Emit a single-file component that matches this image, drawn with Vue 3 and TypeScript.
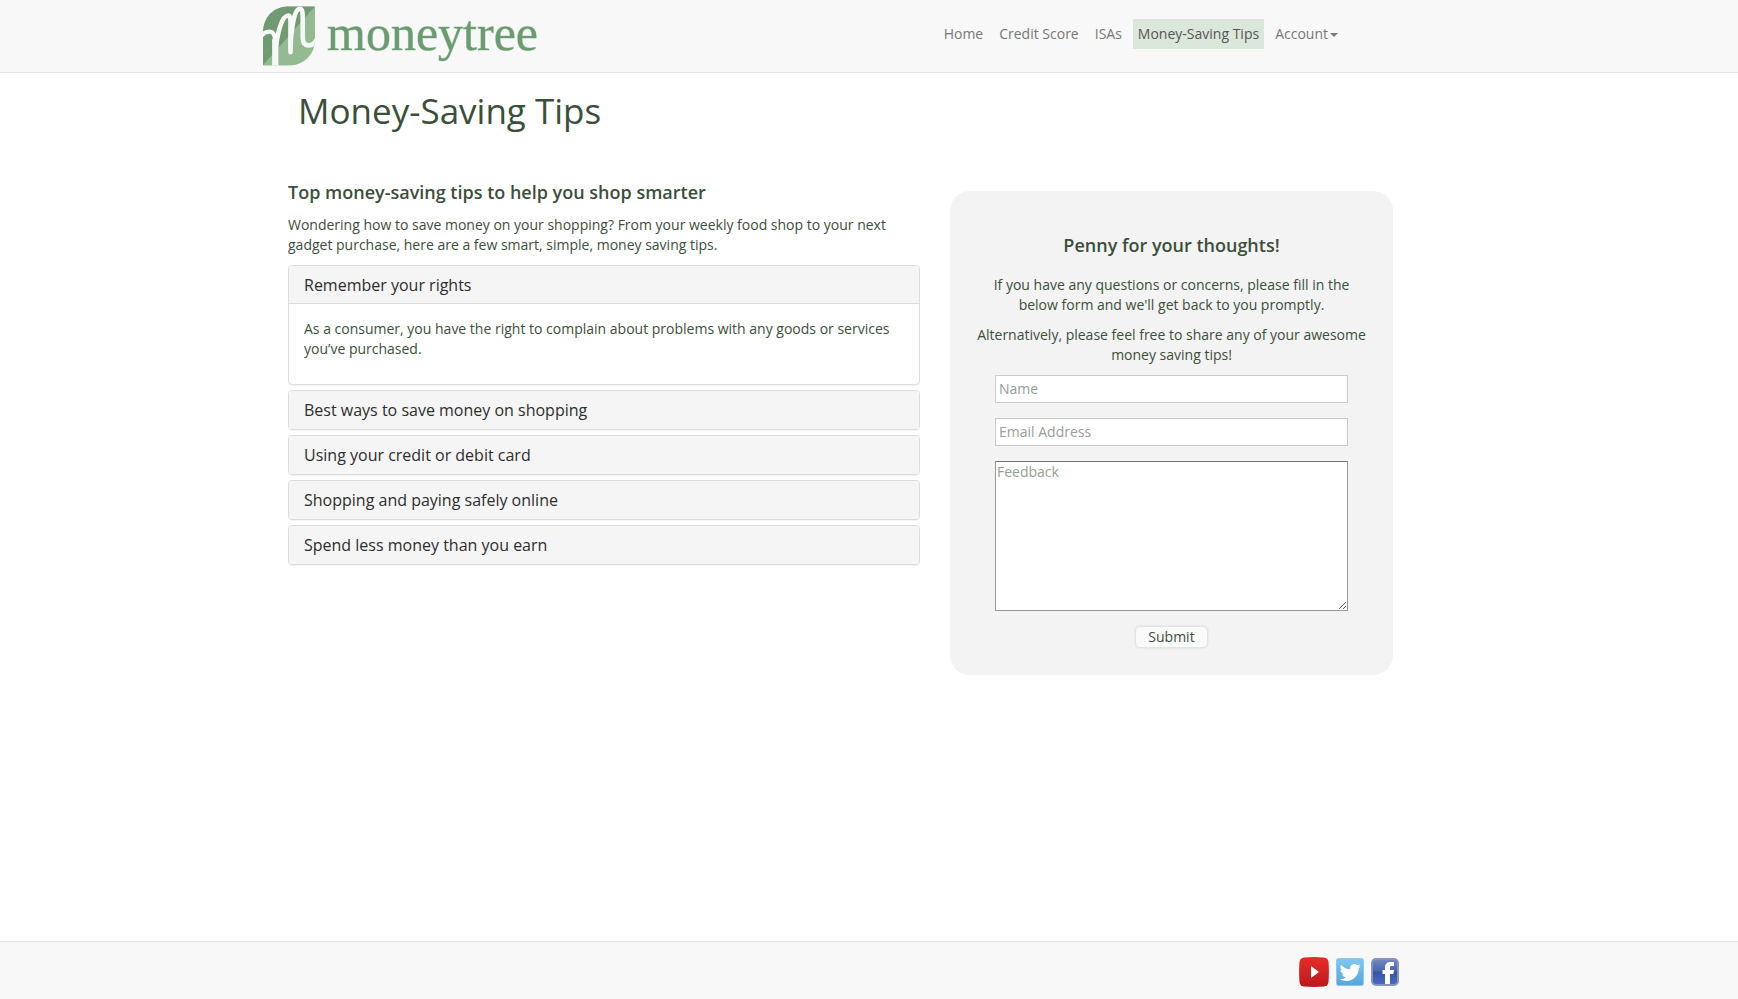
<script setup lang="ts">
import { ref } from 'vue'

interface NavLink {
  label: string
  active?: boolean
  menu?: boolean
}

interface Tip {
  title: string
  body: string
}

const links: NavLink[] = [
  { label: 'Home' },
  { label: 'Credit Score' },
  { label: 'ISAs' },
  { label: 'Money-Saving Tips', active: true },
  { label: 'Account', menu: true },
]

const tips: Tip[] = [
  {
    title: 'Remember your rights',
    body: 'As a consumer, you have the right to complain about problems with any goods or services you’ve purchased.',
  },
  { title: 'Best ways to save money on shopping', body: '' },
  { title: 'Using your credit or debit card', body: '' },
  { title: 'Shopping and paying safely online', body: '' },
  { title: 'Spend less money than you earn', body: '' },
]

const open = ref(0)
const name = ref('')
const email = ref('')
const feedback = ref('')

function toggle(index: number) {
  open.value = open.value === index ? -1 : index
}
</script>

<template>
  <div class="page">
    <header class="navbar">
      <div class="navbar-inner">
        <a class="brand" href="#">
          <svg class="mark" viewBox="24 18 157 180" aria-hidden="true">
            <defs>
              <clipPath id="leaf">
                <path d="M24 198V100C24 50 56 18 106 18H181V118C181 166 146 198 98 198Z" />
              </clipPath>
            </defs>
            <g clip-path="url(#leaf)">
              <rect x="24" y="18" width="157" height="180" fill="#93bb92" />
              <path d="M24 18H181L24 196Z" fill="#709b72" />
              <g fill="none" stroke="#f8f8f8" stroke-linecap="round" stroke-linejoin="round">
                <path stroke-width="13" d="M18 108C26 98 36 95 44 95C56 95 60 104 61 122V150" />
                <path stroke-width="19" d="M61 122V205" />
                <path stroke-width="14" d="M62 150C66 112 78 46 100 46C109 46 107 66 107 90V157" />
                <path stroke-width="14" d="M107 142C108 104 116 26 135 26C144 26 144 40 144 60V112C144 144 172 142 186 120" />
              </g>
            </g>
          </svg>
          <span class="wordmark">moneytree</span>
        </a>
        <nav class="nav">
          <a
            v-for="link in links"
            :key="link.label"
            href="#"
            class="nav-link"
            :class="{ active: link.active }"
          >{{ link.label }}<span v-if="link.menu" class="caret"></span></a>
        </nav>
      </div>
    </header>

    <main class="content">
      <h1>Money-Saving Tips</h1>
      <div class="columns">
        <section class="tips">
          <h2>Top money-saving tips to help you shop smarter</h2>
          <p>
            Wondering how to save money on your shopping? From your weekly food shop to your next gadget
            purchase, here are a few smart, simple, money saving tips.
          </p>
          <div class="accordion">
            <div v-for="(tip, index) in tips" :key="tip.title" class="panel">
              <button
                type="button"
                class="panel-heading"
                :aria-expanded="open === index"
                @click="toggle(index)"
              >{{ tip.title }}</button>
              <div v-if="open === index" class="panel-body">
                <p>{{ tip.body }}</p>
              </div>
            </div>
          </div>
        </section>

        <section class="card">
          <h2>Penny for your thoughts!</h2>
          <p>If you have any questions or concerns, please fill in the below form and we'll get back to you promptly.</p>
          <p>Alternatively, please feel free to share any of your awesome money saving tips!</p>
          <form class="form" @submit.prevent>
            <input v-model="name" type="text" placeholder="Name" aria-label="Name" />
            <input v-model="email" type="email" placeholder="Email Address" aria-label="Email Address" />
            <textarea v-model="feedback" placeholder="Feedback" aria-label="Feedback"></textarea>
            <button type="submit" class="submit">Submit</button>
          </form>
        </section>
      </div>
    </main>

    <footer class="footer">
      <div class="social">
        <a href="#" aria-label="YouTube">
          <svg width="30" height="30" viewBox="0 0 30 30">
            <defs>
              <linearGradient id="yt" x1="0" y1="0" x2="0" y2="1">
                <stop offset="0" stop-color="#e62d28" />
                <stop offset="1" stop-color="#bf171c" />
              </linearGradient>
            </defs>
            <path d="M5 .5Q15-.3 25 .5Q29 1 29.5 5Q30.3 15 29.5 25Q29 29 25 29.5Q15 30.3 5 29.5Q1 29 .5 25Q-.3 15 .5 5Q1 1 5 .5Z" fill="url(#yt)" />
            <path d="M12 9L20 15L12 21Z" fill="#fff" />
          </svg>
        </a>
        <a href="#" aria-label="Twitter">
          <svg width="28" height="28" viewBox="0 0 28 28">
            <defs>
              <linearGradient id="tw" x1="0" y1="0" x2="0" y2="1">
                <stop offset="0" stop-color="#80c8ee" />
                <stop offset="1" stop-color="#55a6dc" />
              </linearGradient>
            </defs>
            <rect x=".5" y=".5" width="27" height="27" rx="2" fill="url(#tw)" stroke="#8bc9ed" />
            <path transform="translate(3.5 3.5) scale(.9)" fill="#fff" d="M23.6 4.9c-.8.4-1.8.6-2.7.8 1-.6 1.7-1.5 2.1-2.6-.9.5-1.9.9-3 1.1a4.8 4.8 0 0 0-8.2 4.4C7.8 8.4 4.2 6.500 1.800 3.500a4.800 4.800 0 0 0 1.500 6.400c-.8 0-1.500-.2-2.200-.6 0 2.300 1.600 4.400 3.800 4.800-.7.2-1.400.2-2.100.1.6 1.900 2.400 3.300 4.500 3.300A9.600 9.600 0 0 1 .2 19.500a13.600 13.600 0 0 0 7.400 2.200c9.100 0 14-7.700 13.700-14.500 1-.6 1.700-1.400 2.300-2.300Z" />
          </svg>
        </a>
        <a href="#" aria-label="Facebook">
          <svg width="28" height="28" viewBox="0 0 28 28">
            <defs>
              <linearGradient id="fb" x1="0" y1="0" x2="0" y2="1">
                <stop offset="0" stop-color="#7388c4" />
                <stop offset=".45" stop-color="#4a66b0" />
                <stop offset=".5" stop-color="#3654a5" />
                <stop offset="1" stop-color="#4a6cc4" />
              </linearGradient>
            </defs>
            <rect x="1" y="1" width="26" height="26" rx="4" fill="url(#fb)" stroke="#8795bd" stroke-width="2" />
            <path d="M14 26V16H11.500V12H14V9.500C14 6 16 4 19.500 4H23V8H20.500C19.300 8 19 8.600 19 9.700V12H23L22.400 16H19V26Z" fill="#fff" />
          </svg>
        </a>
      </div>
    </footer>
  </div>
</template>

<style>
body {
  margin: 0;
}
</style>

<style scoped>
.page {
  min-height: 100vh;
  display: flex;
  flex-direction: column;
  background: #fff;
  color: #3a4f3a;
  font: 14px/20px "Open Sans", sans-serif;
}

.page *,
.page {
  box-sizing: border-box;
}

a {
  text-decoration: none;
}

h1,
h2,
p {
  margin: 0;
}

.navbar {
  background: #f8f8f8;
  border-bottom: 1px solid #e7e7e7;
}

.navbar-inner {
  max-width: 1212px;
  min-height: 72px;
  margin: 0 auto;
  padding-right: 132px;
  display: flex;
  justify-content: space-between;
}

.brand {
  display: flex;
  align-items: flex-start;
  gap: 12px;
  padding-top: 6px;
}

.mark {
  width: 52px;
  height: 60px;
}

.wordmark {
  font-family: "Liberation Serif", serif;
  font-size: 50px;
  line-height: 54px;
  color: #6b9b70;
  -webkit-text-stroke: 1px rgba(107, 155, 112, 0.4);
}

.nav {
  display: flex;
  align-items: flex-start;
  gap: 6px;
  padding-top: 19px;
}

.nav-link {
  padding: 5px;
  color: #777;
  white-space: nowrap;
}

.nav-link.active {
  background: #dbe7db;
  color: #555;
}

.caret {
  display: inline-block;
  margin-left: 2px;
  vertical-align: middle;
  border-top: 4px solid #777;
  border-left: 4px solid transparent;
  border-right: 4px solid transparent;
}

.content {
  flex: 1;
  width: 100%;
  max-width: 1170px;
  margin: 0 auto;
  padding: 18px 61px 40px 4px;
}

h1 {
  padding-left: 10px;
  font-size: 35px;
  line-height: 40px;
  font-weight: 400;
}

h2 {
  font-size: 18px;
  line-height: 20px;
  font-weight: 600;
}

.columns {
  display: grid;
  grid-template-columns: 632fr 443fr;
  gap: 30px;
  align-items: start;
  padding-top: 51px;
}

.tips > p {
  margin: 13px 0 10px;
}

.accordion {
  display: grid;
  gap: 5px;
}

.panel {
  border: 1px solid #ddd;
  border-radius: 4px;
  overflow: hidden;
  box-shadow: 0 1px 1px rgba(0, 0, 0, 0.05);
}

.panel-heading {
  display: block;
  width: 100%;
  padding: 9px 15px;
  border: 0;
  background: #f5f5f5;
  color: #2d2d2d;
  font: 16px/20px "Open Sans", sans-serif;
  text-align: left;
}

.panel-heading[aria-expanded="true"] {
  padding-bottom: 8px;
}

.panel-body {
  padding: 15px 15px 25px;
  border-top: 1px solid #ddd;
}

.card {
  margin-top: 9px;
  padding: 44px 24px 27px;
  border-radius: 20px;
  background: #f3f3f3;
  text-align: center;
}

.card h2 {
  margin-bottom: 20px;
}

.card p {
  margin-bottom: 10px;
}

.form {
  display: flex;
  flex-direction: column;
  align-items: center;
  gap: 15px;
}

input,
textarea {
  width: 353px;
  max-width: 100%;
  background: #fff;
  color: #3a4f3a;
  font: 14px/20px "Open Sans", sans-serif;
}

input {
  height: 28px;
  padding: 2px 3px 4px;
  border: 1px solid #ccc;
}

textarea {
  height: 150px;
  padding: 0 1px;
  border: 1px solid #999;
  border-top-color: #767676;
}

::placeholder {
  color: #959f95;
  opacity: 1;
}

.submit {
  padding: 0 12px;
  border: 1px solid #e4e4e4;
  border-radius: 5px;
  background: #fafafa;
  box-shadow: 0 0 1px 1px #ebebeb;
  color: #3a4f3a;
  font: 14px/20px "Open Sans", sans-serif;
}

.footer {
  padding: 15px 0 12px;
  background: #f8f8f8;
  border-top: 1px solid #e7e7e7;
}

.social {
  max-width: 1060px;
  margin: 0 auto;
  display: flex;
  justify-content: flex-end;
  align-items: center;
  gap: 7px;
}

.social a,
.social svg {
  display: block;
}
</style>
